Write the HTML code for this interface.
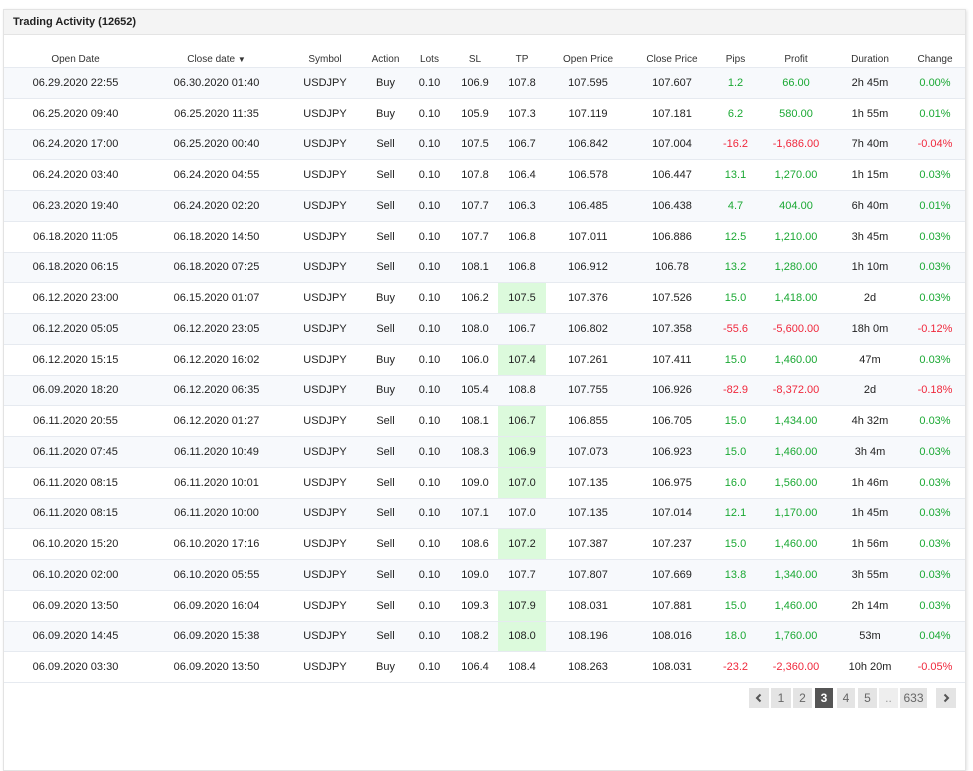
<!DOCTYPE html>
<html><head><meta charset="utf-8"><style>
html,body{margin:0;padding:0;background:#fff;width:973px;height:714px;overflow:hidden;font-family:"Liberation Sans",Arial,sans-serif;}
.panel{position:absolute;left:3px;top:9px;width:961px;height:760px;border:1px solid #e3e3e3;box-shadow:1px 1px 3px rgba(0,0,0,.12);background:#fff;}
.hd{height:24px;background:#f4f4f4;border-bottom:1px solid #e4e4e4;font-size:11px;font-weight:bold;color:#222;line-height:24px;padding-left:9px;}
table{border-collapse:collapse;table-layout:fixed;width:961px;position:absolute;top:35px;left:0;}
th{font-weight:normal;font-size:10px;color:#333;height:20px;vertical-align:bottom;padding:0 0 2px;text-align:center;border-bottom:1px solid #e6eaf0;}
td{font-size:11px;color:#222;text-align:center;height:29.75px;padding:0;border-bottom:1px solid #e6eaf0;}
tr.o td{background:#f7f9fc;}
td.h{background:#dcfadc!important;}
.g{color:#1aa833}.r{color:#f0283c}
.pg{position:absolute;top:688px;left:749px;height:20px;}
.pg span{position:absolute;top:0;height:20px;line-height:20px;background:#e4e4e4;color:#666;font-size:12px;text-align:center;}
.pg span.a{background:#555;color:#fff;font-weight:bold}
</style></head><body>
<div class="panel">
<div class="hd">Trading Activity (12652)</div>
<table>
<colgroup><col style="width:143px"><col style="width:139px"><col style="width:78px"><col style="width:43px"><col style="width:45px"><col style="width:46px"><col style="width:48px"><col style="width:84px"><col style="width:84px"><col style="width:43px"><col style="width:78px"><col style="width:70px"><col style="width:60px"></colgroup>
<tr><th>Open Date</th><th>Close date <span style="font-size:8px">&#9660;</span></th><th>Symbol</th><th>Action</th><th>Lots</th><th>SL</th><th>TP</th><th>Open Price</th><th>Close Price</th><th>Pips</th><th>Profit</th><th>Duration</th><th>Change</th></tr>
<tr class="o"><td>06.29.2020 22:55</td><td>06.30.2020 01:40</td><td>USDJPY</td><td>Buy</td><td>0.10</td><td>106.9</td><td>107.8</td><td>107.595</td><td>107.607</td><td class="g">1.2</td><td class="g">66.00</td><td>2h 45m</td><td class="g">0.00%</td></tr>
<tr><td>06.25.2020 09:40</td><td>06.25.2020 11:35</td><td>USDJPY</td><td>Buy</td><td>0.10</td><td>105.9</td><td>107.3</td><td>107.119</td><td>107.181</td><td class="g">6.2</td><td class="g">580.00</td><td>1h 55m</td><td class="g">0.01%</td></tr>
<tr class="o"><td>06.24.2020 17:00</td><td>06.25.2020 00:40</td><td>USDJPY</td><td>Sell</td><td>0.10</td><td>107.5</td><td>106.7</td><td>106.842</td><td>107.004</td><td class="r">-16.2</td><td class="r">-1,686.00</td><td>7h 40m</td><td class="r">-0.04%</td></tr>
<tr><td>06.24.2020 03:40</td><td>06.24.2020 04:55</td><td>USDJPY</td><td>Sell</td><td>0.10</td><td>107.8</td><td>106.4</td><td>106.578</td><td>106.447</td><td class="g">13.1</td><td class="g">1,270.00</td><td>1h 15m</td><td class="g">0.03%</td></tr>
<tr class="o"><td>06.23.2020 19:40</td><td>06.24.2020 02:20</td><td>USDJPY</td><td>Sell</td><td>0.10</td><td>107.7</td><td>106.3</td><td>106.485</td><td>106.438</td><td class="g">4.7</td><td class="g">404.00</td><td>6h 40m</td><td class="g">0.01%</td></tr>
<tr><td>06.18.2020 11:05</td><td>06.18.2020 14:50</td><td>USDJPY</td><td>Sell</td><td>0.10</td><td>107.7</td><td>106.8</td><td>107.011</td><td>106.886</td><td class="g">12.5</td><td class="g">1,210.00</td><td>3h 45m</td><td class="g">0.03%</td></tr>
<tr class="o"><td>06.18.2020 06:15</td><td>06.18.2020 07:25</td><td>USDJPY</td><td>Sell</td><td>0.10</td><td>108.1</td><td>106.8</td><td>106.912</td><td>106.78</td><td class="g">13.2</td><td class="g">1,280.00</td><td>1h 10m</td><td class="g">0.03%</td></tr>
<tr><td>06.12.2020 23:00</td><td>06.15.2020 01:07</td><td>USDJPY</td><td>Buy</td><td>0.10</td><td>106.2</td><td class="h">107.5</td><td>107.376</td><td>107.526</td><td class="g">15.0</td><td class="g">1,418.00</td><td>2d</td><td class="g">0.03%</td></tr>
<tr class="o"><td>06.12.2020 05:05</td><td>06.12.2020 23:05</td><td>USDJPY</td><td>Sell</td><td>0.10</td><td>108.0</td><td>106.7</td><td>106.802</td><td>107.358</td><td class="r">-55.6</td><td class="r">-5,600.00</td><td>18h 0m</td><td class="r">-0.12%</td></tr>
<tr><td>06.12.2020 15:15</td><td>06.12.2020 16:02</td><td>USDJPY</td><td>Buy</td><td>0.10</td><td>106.0</td><td class="h">107.4</td><td>107.261</td><td>107.411</td><td class="g">15.0</td><td class="g">1,460.00</td><td>47m</td><td class="g">0.03%</td></tr>
<tr class="o"><td>06.09.2020 18:20</td><td>06.12.2020 06:35</td><td>USDJPY</td><td>Buy</td><td>0.10</td><td>105.4</td><td>108.8</td><td>107.755</td><td>106.926</td><td class="r">-82.9</td><td class="r">-8,372.00</td><td>2d</td><td class="r">-0.18%</td></tr>
<tr><td>06.11.2020 20:55</td><td>06.12.2020 01:27</td><td>USDJPY</td><td>Sell</td><td>0.10</td><td>108.1</td><td class="h">106.7</td><td>106.855</td><td>106.705</td><td class="g">15.0</td><td class="g">1,434.00</td><td>4h 32m</td><td class="g">0.03%</td></tr>
<tr class="o"><td>06.11.2020 07:45</td><td>06.11.2020 10:49</td><td>USDJPY</td><td>Sell</td><td>0.10</td><td>108.3</td><td class="h">106.9</td><td>107.073</td><td>106.923</td><td class="g">15.0</td><td class="g">1,460.00</td><td>3h 4m</td><td class="g">0.03%</td></tr>
<tr><td>06.11.2020 08:15</td><td>06.11.2020 10:01</td><td>USDJPY</td><td>Sell</td><td>0.10</td><td>109.0</td><td class="h">107.0</td><td>107.135</td><td>106.975</td><td class="g">16.0</td><td class="g">1,560.00</td><td>1h 46m</td><td class="g">0.03%</td></tr>
<tr class="o"><td>06.11.2020 08:15</td><td>06.11.2020 10:00</td><td>USDJPY</td><td>Sell</td><td>0.10</td><td>107.1</td><td>107.0</td><td>107.135</td><td>107.014</td><td class="g">12.1</td><td class="g">1,170.00</td><td>1h 45m</td><td class="g">0.03%</td></tr>
<tr><td>06.10.2020 15:20</td><td>06.10.2020 17:16</td><td>USDJPY</td><td>Sell</td><td>0.10</td><td>108.6</td><td class="h">107.2</td><td>107.387</td><td>107.237</td><td class="g">15.0</td><td class="g">1,460.00</td><td>1h 56m</td><td class="g">0.03%</td></tr>
<tr class="o"><td>06.10.2020 02:00</td><td>06.10.2020 05:55</td><td>USDJPY</td><td>Sell</td><td>0.10</td><td>109.0</td><td>107.7</td><td>107.807</td><td>107.669</td><td class="g">13.8</td><td class="g">1,340.00</td><td>3h 55m</td><td class="g">0.03%</td></tr>
<tr><td>06.09.2020 13:50</td><td>06.09.2020 16:04</td><td>USDJPY</td><td>Sell</td><td>0.10</td><td>109.3</td><td class="h">107.9</td><td>108.031</td><td>107.881</td><td class="g">15.0</td><td class="g">1,460.00</td><td>2h 14m</td><td class="g">0.03%</td></tr>
<tr class="o"><td>06.09.2020 14:45</td><td>06.09.2020 15:38</td><td>USDJPY</td><td>Sell</td><td>0.10</td><td>108.2</td><td class="h">108.0</td><td>108.196</td><td>108.016</td><td class="g">18.0</td><td class="g">1,760.00</td><td>53m</td><td class="g">0.04%</td></tr>
<tr><td>06.09.2020 03:30</td><td>06.09.2020 13:50</td><td>USDJPY</td><td>Buy</td><td>0.10</td><td>106.4</td><td>108.4</td><td>108.263</td><td>108.031</td><td class="r">-23.2</td><td class="r">-2,360.00</td><td>10h 20m</td><td class="r">-0.05%</td></tr>
</table>
</div>
<div class="pg">
<span style="left:0;width:20px"><svg width="20" height="20" viewBox="0 0 20 20"><path d="M11.5 6.5 L8 10 L11.5 13.5" stroke="#555" stroke-width="2" fill="none"/></svg></span>
<span style="left:22px;width:20px">1</span>
<span style="left:44px;width:19px">2</span>
<span class="a" style="left:66px;width:18px">3</span>
<span style="left:88px;width:18px">4</span>
<span style="left:109px;width:19px">5</span>
<span style="left:130px;width:19px;background:#eee;color:#999">..</span>
<span style="left:151px;width:27px">633</span>
<span style="left:187px;width:20px"><svg width="20" height="20" viewBox="0 0 20 20"><path d="M8.5 6.5 L12 10 L8.5 13.5" stroke="#555" stroke-width="2" fill="none"/></svg></span>
</div>
</body></html>
